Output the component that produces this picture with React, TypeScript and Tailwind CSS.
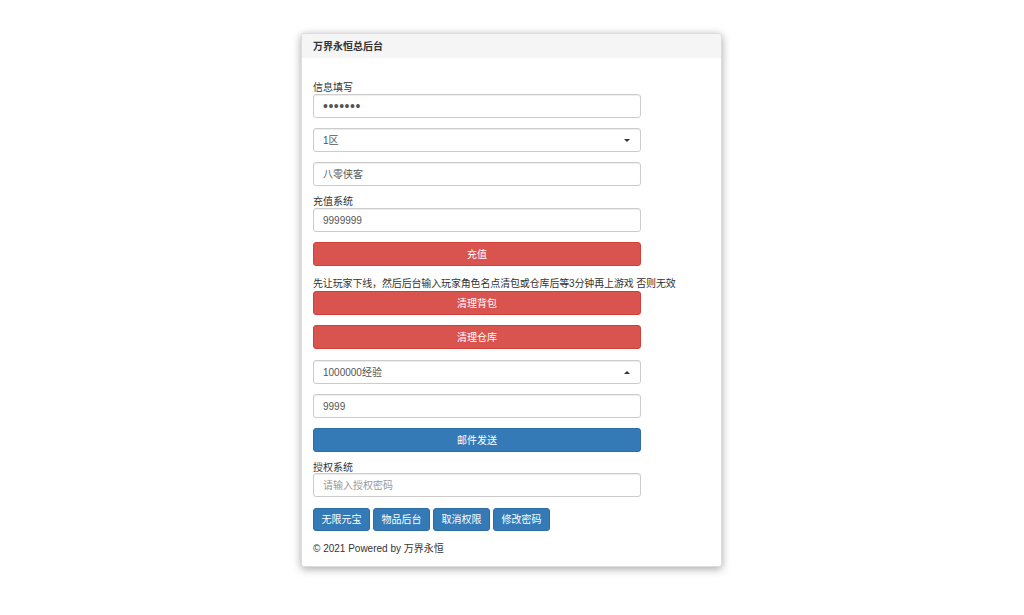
import React from "react";

function Field({ value, placeholder, arrow, dots }: { value?: string; placeholder?: string; arrow?: "up" | "down"; dots?: boolean }) {
  return (
    <div className="flex items-center justify-between w-[328px] h-[24px] border border-[#ccc] rounded-[3px] bg-white px-[9px] text-[10px] shadow-[inset_0_1px_1px_rgba(0,0,0,0.075)]">
      <span className={`${value ? "text-[#555]" : "text-[#999]"} ${dots ? "text-[14px] tracking-[0.5px]" : ""}`}>
        {value ?? placeholder}
      </span>
      {arrow && (
        <span
          className={`w-0 h-0 border-l-[3px] border-r-[3px] border-l-transparent border-r-transparent mr-[1px] ${
            arrow === "down" ? "border-t-[3px] border-t-[#333]" : "border-b-[3px] border-b-[#333]"
          }`}
        />
      )}
    </div>
  );
}

function WideButton({ label, color }: { label: string; color: "red" | "blue" }) {
  return (
    <button
      className={`w-[328px] h-[24px] rounded-[3px] text-white text-[10px] flex items-center justify-center ${
        color === "red" ? "bg-[#d9534f] border border-[#d43f3a]" : "bg-[#337ab7] border border-[#2e6da4]"
      }`}
    >
      {label}
    </button>
  );
}

export default function App() {
  const smallButtons = ["无限元宝", "物品后台", "取消权限", "修改密码"];

  return (
    <div
      className="w-full min-h-[615px] bg-white pt-[33px] text-[#333]"
      style={{ fontFamily: '"Liberation Sans", "Noto Sans CJK SC", sans-serif' }}
    >
      <div className="w-[421px] ml-[301px] bg-white rounded-[3px] border border-[#ddd] shadow-[0_2px_9px_rgba(0,0,0,0.35)] overflow-hidden">
        {/* Header */}
        <div className="h-[24px] bg-[#f5f5f5] flex items-center px-[11px] text-[10px] font-bold text-[#333]">
          万界永恒总后台
        </div>

        {/* Body */}
        <div className="px-[11px] pt-[24px] pb-[11px] flex flex-col text-[10px]">
          <div className="h-[12px] leading-[12px]">信息填写</div>
          <Field value="•••••••" dots />
          <div className="mt-[10px]">
            <Field value="1区" arrow="down" />
          </div>
          <div className="mt-[10px]">
            <Field value="八零侠客" />
          </div>
          <div className="mt-[10px] h-[12px] leading-[12px]">充值系统</div>
          <Field value="9999999" />
          <div className="mt-[10px]">
            <WideButton label="充值" color="red" />
          </div>
          <div className="mt-[10px] h-[15px] leading-[15px] whitespace-nowrap tracking-[-0.15px]">
            先让玩家下线，然后后台输入玩家角色名点清包或仓库后等3分钟再上游戏 否则无效
          </div>
          <WideButton label="清理背包" color="red" />
          <div className="mt-[10px]">
            <WideButton label="清理仓库" color="red" />
          </div>
          <div className="mt-[11px]">
            <Field value="1000000经验" arrow="up" />
          </div>
          <div className="mt-[10px]">
            <Field value="9999" />
          </div>
          <div className="mt-[10px]">
            <WideButton label="邮件发送" color="blue" />
          </div>
          <div className="mt-[10px] h-[11px] leading-[11px]">授权系统</div>
          <Field placeholder="请输入授权密码" />
          <div className="mt-[11px] flex gap-[3px]">
            {smallButtons.map((b) => (
              <button
                key={b}
                className="w-[57px] h-[23px] rounded-[3px] bg-[#337ab7] border border-[#2e6da4] text-white text-[10px] flex items-center justify-center"
              >
                {b}
              </button>
            ))}
          </div>
          <div className="mt-[12px] h-[12px] leading-[12px]">© 2021 Powered by 万界永恒</div>
        </div>
      </div>
    </div>
  );
}
